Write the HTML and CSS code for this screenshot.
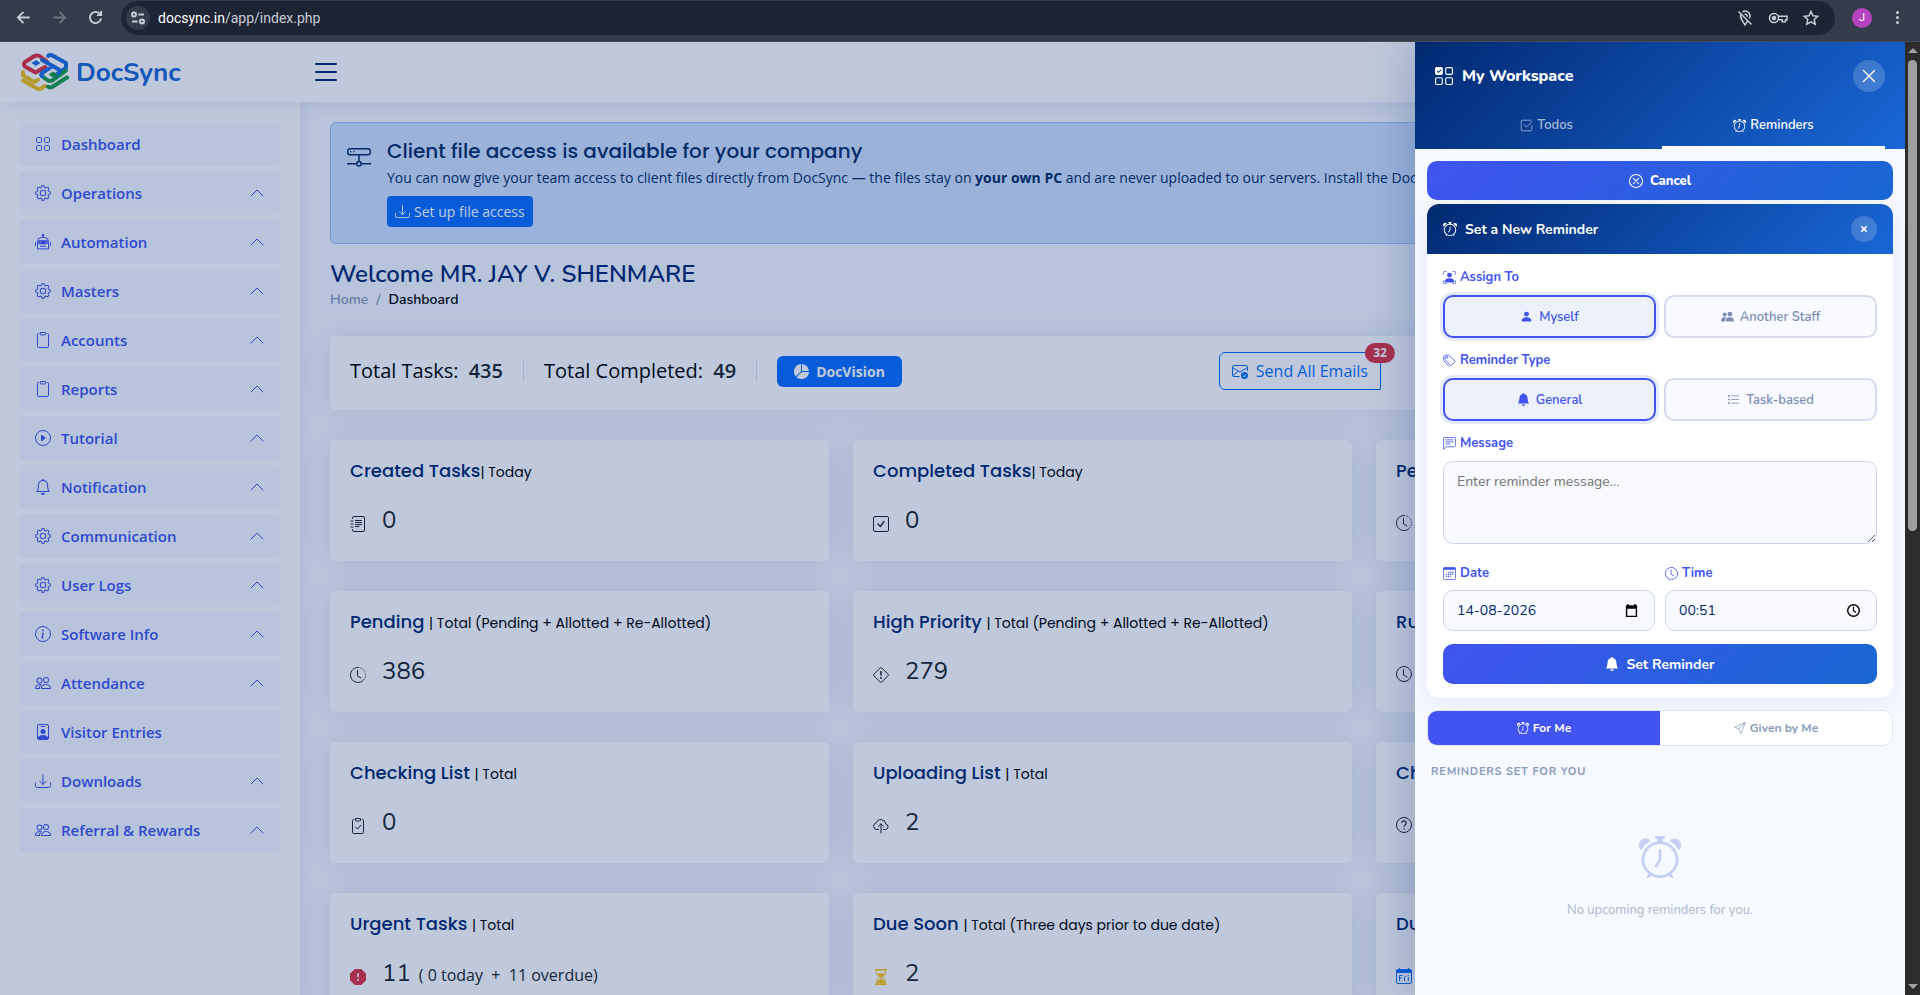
FILE: index.html
```
<!DOCTYPE html>
<html lang="en">
<head>
    <meta charset="UTF-8">
    <meta name="viewport" content="width=device-width, initial-scale=1.0">
    <title>Dashboard - DocSync</title>
    <link rel="stylesheet" href="styles.css">
</head>
<body>
    <!-- icon sprite -->
    <svg class="sprite" aria-hidden="true">
        <symbol id="i-grid" viewBox="0 0 16 16"><g fill="none" stroke="currentColor"><rect x="1.5" y="1.5" width="5" height="5" rx="1"/><rect x="9.5" y="1.5" width="5" height="5" rx="1"/><rect x="1.5" y="9.5" width="5" height="5" rx="1"/><rect x="9.5" y="9.5" width="5" height="5" rx="1"/></g></symbol>
        <symbol id="i-gear" viewBox="0 0 16 16"><path d="M8 4.754a3.246 3.246 0 1 0 0 6.492 3.246 3.246 0 0 0 0-6.492M5.754 8a2.246 2.246 0 1 1 4.492 0 2.246 2.246 0 0 1-4.492 0"/><path d="M9.796 1.343c-.527-1.79-3.065-1.79-3.592 0l-.094.319a.873.873 0 0 1-1.255.52l-.292-.16c-1.64-.892-3.433.902-2.54 2.541l.159.292a.873.873 0 0 1-.52 1.255l-.319.094c-1.79.527-1.79 3.065 0 3.592l.319.094a.873.873 0 0 1 .52 1.255l-.16.292c-.892 1.64.901 3.434 2.541 2.54l.292-.159a.873.873 0 0 1 1.255.52l.094.319c.527 1.79 3.065 1.79 3.592 0l.094-.319a.873.873 0 0 1 1.255-.52l.292.16c1.64.893 3.434-.902 2.54-2.541l-.159-.292a.873.873 0 0 1 .52-1.255l.319-.094c1.79-.527 1.79-3.065 0-3.592l-.319-.094a.873.873 0 0 1-.52-1.255l.16-.292c.893-1.64-.902-3.433-2.541-2.54l-.292.159a.873.873 0 0 1-1.255-.52zm-2.633.283c.246-.835 1.428-.835 1.674 0l.094.319a1.873 1.873 0 0 0 2.693 1.115l.291-.16c.764-.415 1.6.42 1.184 1.185l-.159.292a1.873 1.873 0 0 0 1.116 2.692l.318.094c.835.246.835 1.428 0 1.674l-.319.094a1.873 1.873 0 0 0-1.115 2.693l.16.291c.415.764-.42 1.6-1.185 1.184l-.291-.159a1.873 1.873 0 0 0-2.693 1.116l-.094.318c-.246.835-1.428.835-1.674 0l-.094-.319a1.873 1.873 0 0 0-2.692-1.115l-.292.16c-.764.415-1.6-.42-1.184-1.185l.159-.291A1.873 1.873 0 0 0 1.945 8.93l-.319-.094c-.835-.246-.835-1.428 0-1.674l.319-.094A1.873 1.873 0 0 0 3.06 4.377l-.16-.292c-.415-.764.42-1.6 1.185-1.184l.292.159a1.873 1.873 0 0 0 2.692-1.115z"/></symbol>
        <symbol id="i-robot" viewBox="0 0 16 16"><path fill-rule="evenodd" d="M4 6.2h8a.8.8 0 0 1 .8.8v1.6a1.6 1.6 0 0 1-1.6 1.6H4.8a1.6 1.6 0 0 1-1.6-1.6V7a.8.8 0 0 1 .8-.8zm1.2 1.2a.7.7 0 1 0 0 1.4.7.7 0 0 0 0-1.4zm5.6 0a.7.7 0 1 0 0 1.4.7.7 0 0 0 0-1.4z"/><path d="M8 .5v3M2.5 14.5v-7a4 4 0 0 1 4-4h3a4 4 0 0 1 4 4v7zM.5 8.5v3M15.5 8.5v3M5.5 12.3h5" fill="none" stroke="currentColor" stroke-linecap="round" stroke-linejoin="round"/><circle cx="8" cy="1.2" r="1.2"/></symbol>
        <symbol id="i-clipboard" viewBox="0 0 16 16"><g fill="none" stroke="currentColor" stroke-linecap="round"><path d="M4 1.5h-.5a1 1 0 0 0-1 1v12a1 1 0 0 0 1 1h9a1 1 0 0 0 1-1v-12a1 1 0 0 0-1-1H12"/><rect x="5.5" y=".5" width="5" height="2.5" rx=".5"/></g></symbol>
        <symbol id="i-clipboard-check" viewBox="0 0 16 16"><g fill="none" stroke="currentColor" stroke-linecap="round" stroke-linejoin="round"><path d="M4 1.5h-.5a1 1 0 0 0-1 1v12a1 1 0 0 0 1 1h9a1 1 0 0 0 1-1v-12a1 1 0 0 0-1-1H12"/><rect x="5.5" y=".5" width="5" height="2.5" rx=".5"/><path d="m5.5 9 2 2 3.2-3.7"/></g></symbol>
        <symbol id="i-play" viewBox="0 0 16 16"><circle cx="8" cy="8" r="7.5" fill="none" stroke="currentColor"/><path d="M6.3 5.1a.5.5 0 0 1 .5 0l3.5 2.5a.5.5 0 0 1 0 .8l-3.5 2.5a.5.5 0 0 1-.8-.4v-5a.5.5 0 0 1 .3-.4"/></symbol>
        <symbol id="i-bell" viewBox="0 0 16 16"><path d="M8 16a2 2 0 0 0 2-2H6a2 2 0 0 0 2 2M8 1.918l-.797.161A4 4 0 0 0 4 6c0 .628-.134 2.197-.459 3.742-.16.767-.376 1.566-.663 2.258h10.244c-.287-.692-.502-1.49-.663-2.258C12.134 8.197 12 6.628 12 6a4 4 0 0 0-3.203-3.92zM14.22 12c.223.447.481.801.78 1H1c.299-.199.557-.553.78-1C2.68 10.2 3 6.88 3 6c0-2.42 1.72-4.44 4.005-4.901a1 1 0 1 1 1.99 0A5 5 0 0 1 13 6c0 .88.32 4.2 1.22 6"/></symbol>
        <symbol id="i-bell-fill" viewBox="0 0 16 16"><path d="M8 16a2 2 0 0 0 2-2H6a2 2 0 0 0 2 2m.995-14.901a1 1 0 1 0-1.99 0A5 5 0 0 0 3 6c0 1.098-.5 6-2 7h14c-1.5-1-2-5.902-2-7 0-2.42-1.72-4.44-4.005-4.901"/></symbol>
        <symbol id="i-info" viewBox="0 0 16 16"><circle cx="8" cy="8" r="7.5" fill="none" stroke="currentColor"/><path d="m8.93 6.588-2.29.287-.082.38.45.083c.294.07.352.176.288.469l-.738 3.468c-.194.897.105 1.319.808 1.319.545 0 1.178-.252 1.465-.598l.088-.416c-.2.176-.492.246-.686.246-.275 0-.375-.193-.304-.533zM9 4.5a1 1 0 1 1-2 0 1 1 0 0 1 2 0"/></symbol>
        <symbol id="i-people" viewBox="0 0 16 16"><path d="M15 14s1 0 1-1-1-4-5-4-5 3-5 4 1 1 1 1zm-7.978-1L7 12.996c.001-.264.167-1.03.76-1.72C8.312 10.629 9.282 10 11 10c1.717 0 2.687.63 3.24 1.276.593.69.758 1.457.76 1.72l-.008.002-.014.002zM11 7a2 2 0 1 0 0-4 2 2 0 0 0 0 4m3-2a3 3 0 1 1-6 0 3 3 0 0 1 6 0M6.936 9.28a6 6 0 0 0-1.23-.247A7 7 0 0 0 5 9c-4 0-5 3-5 4q0 1 1 1h4.216A2.24 2.24 0 0 1 5 13c0-1.01.377-2.042 1.09-2.904.243-.294.526-.569.846-.816M4.92 10A5.5 5.5 0 0 0 4 13H1c0-.26.164-1.03.76-1.724.545-.636 1.492-1.256 3.16-1.275ZM1.5 5.5a3 3 0 1 1 6 0 3 3 0 0 1-6 0m3-2a2 2 0 1 0 0 4 2 2 0 0 0 0-4"/></symbol>
        <symbol id="i-people-fill" viewBox="0 0 16 16"><path d="M7 14s-1 0-1-1 1-4 5-4 5 3 5 4-1 1-1 1zm4-6a3 3 0 1 0 0-6 3 3 0 0 0 0 6m-5.784 6A2.24 2.24 0 0 1 5 13c0-1.355.68-2.75 1.936-3.72A6.3 6.3 0 0 0 5 9c-4 0-5 3-5 4s1 1 1 1zM4.5 8a2.5 2.5 0 1 0 0-5 2.5 2.5 0 0 0 0 5"/></symbol>
        <symbol id="i-person-fill" viewBox="0 0 16 16"><path d="M3 14s-1 0-1-1 1-4 6-4 6 3 6 4-1 1-1 1zm5-6a3 3 0 1 0 0-6 3 3 0 0 0 0 6"/></symbol>
        <symbol id="i-visitor" viewBox="0 0 16 16"><rect x="2.5" y=".5" width="11" height="15" rx="1.5" fill="none" stroke="currentColor"/><path d="M6 2.5h4" stroke="currentColor" stroke-linecap="round"/><circle cx="8" cy="7.5" r="2.5"/><path d="M2.5 14.5c.8-2.6 3-3.5 5.5-3.5s4.7.9 5.5 3.5l-1 1h-9z"/></symbol>
        <symbol id="i-download" viewBox="0 0 16 16"><path d="M.5 9.9v2.6a2 2 0 0 0 2 2h11a2 2 0 0 0 2-2V9.9M8 1.5v9.8M4.8 8.2 8 11.4l3.2-3.2" fill="none" stroke="currentColor" stroke-linecap="round" stroke-linejoin="round"/></symbol>
        <symbol id="i-chevron-up" viewBox="0 0 16 16"><path d="m2 11 6-6 6 6" fill="none" stroke="currentColor" stroke-linecap="round" stroke-linejoin="round"/></symbol>
        <symbol id="i-list" viewBox="0 0 16 16"><path d="M3 4h10M3 8h10M3 12h10" fill="none" stroke="currentColor" stroke-linecap="round"/></symbol>
        <symbol id="i-hdd" viewBox="0 0 16 16"><g fill="none" stroke="currentColor"><rect x=".5" y="2.5" width="15" height="4" rx="1.5"/><path d="M8 6.5V11M0 12.5h6.5M9.5 12.5H16"/><circle cx="8" cy="12.5" r="1.5"/></g><circle cx="2.5" cy="4.5" r=".5"/><circle cx="4.5" cy="4.5" r=".5"/></symbol>
        <symbol id="i-pie" viewBox="0 0 16 16"><path d="M15.985 8.5H8.207l-5.5 5.5a8 8 0 0 0 13.277-5.5zM2 13.292A8 8 0 0 1 7.5.015v7.778zM8.5.015V7.5h7.485A8 8 0 0 0 8.5.015"/></symbol>
        <symbol id="i-mail-check" viewBox="0 0 16 16"><path d="M7.5 13.5H2A1.5 1.5 0 0 1 .5 12V4A1.5 1.5 0 0 1 2 2.5h12A1.5 1.5 0 0 1 15.5 4v4M.5 4.5 8 9l7.5-4.5M.7 12.8l5.7-4.6" fill="none" stroke="currentColor"/><path fill-rule="evenodd" d="M12.5 9a3.5 3.5 0 1 0 0 7 3.5 3.5 0 0 0 0-7m1.7 2.6-1.9 2.7-1.5-1.3.5-.6.9.7 1.3-1.9z"/></symbol>
        <symbol id="i-journal" viewBox="0 0 16 16"><path d="M2.5 2.5V2A1.5 1.5 0 0 1 4 .5h9A1.5 1.5 0 0 1 14.5 2v12a1.5 1.5 0 0 1-1.5 1.5H4A1.5 1.5 0 0 1 2.5 14v-.5M1 5h2M1 8h2M1 11h2M5.5 4.5h6M5.5 6.5h6M5.5 8.5h6M5.5 10.5H9" fill="none" stroke="currentColor" stroke-linecap="round"/></symbol>
        <symbol id="i-check-square" viewBox="0 0 16 16"><rect x=".5" y=".5" width="15" height="15" rx="1.5" fill="none" stroke="currentColor"/><path d="m5 8 2.3 2.5L11 5.5" fill="none" stroke="currentColor" stroke-width="1.3" stroke-linecap="round" stroke-linejoin="round"/></symbol>
        <symbol id="i-clock" viewBox="0 0 16 16"><g fill="none" stroke="currentColor" stroke-linecap="round"><circle cx="8" cy="8" r="7.5"/><path d="M7.5 3.5V9l3.5 2"/></g></symbol>
        <symbol id="i-clock-history" viewBox="0 0 16 16"><g fill="none" stroke="currentColor"><path d="M8 .5a7.5 7.5 0 1 0 5.3 12.8"/><path d="M8 .5a7.5 7.5 0 0 1 5.3 12.8" stroke-dasharray="1.3 1.3"/><path d="M7.5 3.5V9l3.5 2" stroke-linecap="round"/></g></symbol>
        <symbol id="i-diamond" viewBox="0 0 16 16"><path d="M7.3.9a1 1 0 0 1 1.4 0l6.4 6.4a1 1 0 0 1 0 1.4l-6.4 6.4a1 1 0 0 1-1.4 0L.9 8.7a1 1 0 0 1 0-1.4z" fill="none" stroke="currentColor"/><path d="M7.1 5a.9.9 0 1 1 1.8 0l-.35 3.5a.55.55 0 0 1-1.1 0zM9 11a1 1 0 1 1-2 0 1 1 0 0 1 2 0"/></symbol>
        <symbol id="i-cloud-up" viewBox="0 0 16 16"><path d="M5.5 11.5H3.8A3.3 3.3 0 0 1 3.1 5a5 5 0 0 1 9.700 1 2.800 2.800 0 0 1-.2 5.500h-2.100M8 15V6M5.500 8.300 8 5.800l2.500 2.500" fill="none" stroke="currentColor" stroke-linecap="round" stroke-linejoin="round"/></symbol>
        <symbol id="i-question" viewBox="0 0 16 16"><g fill="none" stroke="currentColor"><circle cx="8" cy="8" r="7.5"/><path d="M5.8 6a2.2 2.2 0 1 1 3.3 1.9C8.3 8.4 8 8.7 8 9.8" stroke-width="1.2"/></g><circle cx="8" cy="11.7" r=".8"/></symbol>
        <symbol id="i-octagon-fill" viewBox="0 0 16 16"><path fill-rule="evenodd" d="M11.46.146A.5.5 0 0 0 11.107 0H4.893a.5.5 0 0 0-.353.146L.146 4.54A.5.5 0 0 0 0 4.893v6.214a.5.5 0 0 0 .146.353l4.394 4.394a.5.5 0 0 0 .353.146h6.214a.5.5 0 0 0 .353-.146l4.394-4.394a.5.5 0 0 0 .146-.353V4.893a.5.5 0 0 0-.146-.353zM8 4a.9.9 0 0 1 .9.995l-.35 3.507a.553.553 0 0 1-1.1 0L7.1 4.995A.9.9 0 0 1 8 4m0 6a1 1 0 1 1 0 2 1 1 0 0 1 0-2"/></symbol>
        <symbol id="i-hourglass" viewBox="0 0 16 16"><path d="M2 0h12v1.5H2zM2 14.5h12V16H2z"/><path d="M3.5 1.5v2c0 2.3 1.4 3.3 3.3 4.500-1.900 1.200-3.300 2.200-3.300 4.500v2M12.500 1.500v2c0 2.300-1.400 3.300-3.300 4.500 1.900 1.200 3.300 2.200 3.300 4.500v2" fill="none" stroke="currentColor"/><path d="M4.5 4.5h7C11 6.5 9 7 8.5 8v2c1.5.5 3 1.5 3.5 4.5H4c.5-3 2-4 3.500-4.500V8C7 7 5 6.500 4.500 4.500"/></symbol>
        <symbol id="i-calendar-day" viewBox="0 0 16 16"><rect x=".5" y="1.5" width="15" height="14" rx="1.5" fill="none" stroke="currentColor"/><path d="M.5 5V2.5a1 1 0 0 1 1-1H3V0h1v1.5h8V0h1v1.5h1.5a1 1 0 0 1 1 1V5z"/><path d="M3.5 13V7.5h3M3.5 10H6M8.500 13V9.500c0-1 .8-1.300 1.800-1.300M12.300 9v4M12.300 7v1" fill="none" stroke="currentColor"/></symbol>
        <symbol id="i-calendar-range" viewBox="0 0 16 16"><rect x=".5" y=".5" width="15" height="15" rx="1.5" fill="none" stroke="currentColor"/><path d="M.5 3.5h15V2A1.5 1.5 0 0 0 14 .5H2A1.5 1.5 0 0 0 .5 2z"/><path d="M6.5 6.5h7M3.5 9H13M3.5 11.5h6" stroke="currentColor" stroke-width="1.5" stroke-dasharray="1.5 1"/></symbol>
        <symbol id="i-workspace" viewBox="0 0 16 16"><g fill="none" stroke="currentColor"><rect x="9.5" y=".5" width="6" height="6" rx="1.2"/><rect x=".5" y="9.5" width="6" height="6" rx="1.2"/><rect x="9.5" y="9.5" width="6" height="6" rx="1.2"/></g><path fill-rule="evenodd" d="M1.5 0h4A1.5 1.5 0 0 1 7 1.5v4A1.5 1.5 0 0 1 5.5 7h-4A1.5 1.5 0 0 1 0 5.5v-4A1.5 1.5 0 0 1 1.5 0m3.7 2.1L3.1 4.2l-1-1-.5.6 1.5 1.5 2.7-2.7z"/></symbol>
        <symbol id="i-check2" viewBox="0 0 16 16"><path d="M13 1.5H3A1.5 1.5 0 0 0 1.5 3v10A1.5 1.5 0 0 0 3 14.5h10a1.5 1.5 0 0 0 1.5-1.5V8M5 7l3 3 6.8-7" fill="none" stroke="currentColor" stroke-linecap="round" stroke-linejoin="round"/></symbol>
        <symbol id="i-alarm" viewBox="0 0 16 16"><path d="M8.5 5.5a.5.5 0 0 0-1 0v3.362l-1.429 2.38a.5.5 0 1 0 .858.515l1.5-2.5A.5.5 0 0 0 8.5 9z"/><path d="M6.5 0a.5.5 0 0 0 0 1H7v1.07a7.001 7.001 0 0 0-3.273 12.474l-.602.602a.5.5 0 0 0 .707.708l.746-.746A6.97 6.97 0 0 0 8 16a6.97 6.97 0 0 0 3.422-.892l.746.746a.5.5 0 0 0 .707-.708l-.601-.602A7.001 7.001 0 0 0 9 2.07V1h.5a.5.5 0 0 0 0-1zm1.038 3.018a6 6 0 0 1 .924 0 6 6 0 1 1-.924 0M0 3.5c0 .753.333 1.429.86 1.887A8.04 8.04 0 0 1 4.387 1.86 2.5 2.5 0 0 0 0 3.5M13.5 1c-.753 0-1.429.333-1.887.86a8.04 8.04 0 0 1 3.527 3.527A2.5 2.5 0 0 0 13.5 1"/></symbol>
        <symbol id="i-x" viewBox="0 0 16 16"><path d="m2.5 2.5 11 11M13.5 2.5l-11 11" stroke="currentColor" stroke-width="1.4" stroke-linecap="round"/></symbol>
        <symbol id="i-x-bold" viewBox="0 0 16 16"><path d="m2.5 2.5 11 11M13.5 2.5l-11 11" stroke="currentColor" stroke-width="3.4"/></symbol>
        <symbol id="i-x-circle" viewBox="0 0 16 16"><g fill="none" stroke="currentColor" stroke-width="1.2" stroke-linecap="round"><circle cx="8" cy="8" r="7.4"/><path d="m5 5 6 6M11 5l-6 6"/></g></symbol>
        <symbol id="i-bounding" viewBox="0 0 16 16"><path d="M.5 4V2A1.5 1.5 0 0 1 2 .5h2M12 .5h2A1.5 1.5 0 0 1 15.5 2v2M15.5 12v2a1.5 1.5 0 0 1-1.5 1.5h-2M4 15.5H2A1.5 1.5 0 0 1 .5 14v-2" fill="none" stroke="currentColor" stroke-linecap="round"/><path d="M3 14s-1 0-1-1 1-4 6-4 6 3 6 4-1 1-1 1zm8-9a3 3 0 1 1-6 0 3 3 0 0 1 6 0"/></symbol>
        <symbol id="i-tags" viewBox="0 0 16 16"><g fill="none" stroke="currentColor" stroke-linejoin="round"><path d="M2.5 1.5h4.600l8 7.500-5.500 5.500-7.100-7.800z"/><path d="M.5 2.5v5.2l7 7.8"/><circle cx="5" cy="4.2" r="1"/></g></symbol>
        <symbol id="i-list-task" viewBox="0 0 16 16"><path d="M5.5 3.5h9M5.5 8h9M5.5 12.5h9" stroke="currentColor" stroke-linecap="round"/><path d="M1.5 2.5h2v2h-2zM1.5 7h2v2h-2zM1.5 11.5h2v2h-2z"/></symbol>
        <symbol id="i-chat" viewBox="0 0 16 16"><path d="M.5 14V2A1.5 1.5 0 0 1 2 .5h12A1.5 1.5 0 0 1 15.5 2v8.5A1.5 1.5 0 0 1 14 12H4.5L.5 15zM3.5 3.5h9M3.5 6h9M3.5 8.5h5" fill="none" stroke="currentColor" stroke-linecap="round"/></symbol>
        <symbol id="i-send" viewBox="0 0 16 16"><path d="M15.3.7.8 6.7l5.5 3 3 5.5zM15.3.7l-9 9" fill="none" stroke="currentColor" stroke-linejoin="round"/></symbol>
    </svg>

    <div class="browser-bar">
        <div class="nav-buttons">
            <svg viewBox="0 0 16 16"><path d="M14.5 8H2M8 2 2 8l6 6" /></svg>
            <svg class="dim" viewBox="0 0 16 16"><path d="M1.5 8H14M8 2l6 6-6 6"/></svg>
            <svg viewBox="0 0 16 16"><path d="M13 4.5A6 6 0 1 0 14 9M14 1v4.5H9.5"/></svg>
        </div>
        <div class="url-bar">
            <span class="site-info">
                <svg viewBox="0 0 16 16"><circle cx="4" cy="4.5" r="2"/><path d="M8.5 4.5H14M2 11.5h5.5"/><circle cx="12" cy="11.5" r="2"/></svg>
            </span>
            <span class="url">docsync.in<span>/app/index.php</span></span>
            <div class="url-actions">
                <svg viewBox="0 0 16 16"><path d="M4 4c-1.5 3 1 6.5 4 11 1.2-1.8 2.3-3.4 3.1-4.8M5.5 2C8.500-.2 13 2 13 6c0 .8-.2 1.600-.6 2.500M1.500 1.500l13 13"/><path d="M7.5 4.3A2 2 0 0 1 10 7"/></svg>
                <svg class="key" viewBox="0 0 20 16"><circle cx="6" cy="8" r="4.5"/><circle class="dot" cx="6" cy="8" r="1.5"/><path d="M10.2 6.3H19v3.4h-1.5v2h-3.3v-2h-4"/></svg>
                <svg viewBox="0 0 16 16"><path d="m8 1.5 2 4.3 4.7.5-3.5 3.2 1 4.7L8 11.8l-4.200 2.400 1-4.700L1.300 6.300 6 5.800z"/></svg>
            </div>
        </div>
        <span class="profile">J</span>
        <span class="kebab"><i></i><i></i><i></i></span>
    </div>

    <div class="viewport">
        <div class="app">
            <header class="topbar">
                <a href="#" class="logo">
                    <svg viewBox="0 0 48 38" fill="none" stroke-width="4" stroke-linejoin="round" stroke-linecap="round">
                        <path stroke="#f2c21a" d="M2 19v3.5L13 29l4-2.2"/>
                        <path stroke="#f2c21a" d="M2 27.5 16 35.5q2.5 1.2 5-.5l3-2"/>
                        <path stroke="#1d6fe0" d="M27 3q2-1.8 4.5-.5L45 10v5l-4 2.5"/>
                        <path stroke="#1d9c4b" d="M46 24.5 31 34q-2 1.2-4-.5"/>
                        <path stroke="#1d9c4b" d="M45 17.5 31 27.5q-2 1-4 0l-5.5-4.2"/>
                        <path stroke="#e2313c" d="M26 8.5 18.5 3q-2.5-1.2-5 0L4 9q-2 2 0 4.5l10.5 6 9.5-5.5"/>
                        <path stroke="#1d6fe0" d="m21 7 16 9q3 2 0 4.5l-2 1.2M30 14l-9 6q-1.5 1.5 0 3.2"/>
                        <path fill="#1d6fe0" stroke="none" d="m15 7 4.5 3-4.5 3-4.5-3z"/>
                        <path fill="#1d9c4b" stroke="none" d="m32 18.5 4.5 3-4.5 3-4.5-3z"/>
                    </svg>
                    <span>DocSync</span>
                </a>
                <button type="button" class="menu-toggle" aria-label="Toggle sidebar"><svg class="icon"><use href="#i-list"/></svg></button>
            </header>

            <div class="layout">
                <aside class="sidebar">
                    <nav>
                        <a href="#"><svg class="icon"><use href="#i-grid"/></svg><span>Dashboard</span></a>
                        <a href="#"><svg class="icon"><use href="#i-gear"/></svg><span>Operations</span><svg class="icon chevron"><use href="#i-chevron-up"/></svg></a>
                        <a href="#"><svg class="icon"><use href="#i-robot"/></svg><span>Automation</span><svg class="icon chevron"><use href="#i-chevron-up"/></svg></a>
                        <a href="#"><svg class="icon"><use href="#i-gear"/></svg><span>Masters</span><svg class="icon chevron"><use href="#i-chevron-up"/></svg></a>
                        <a href="#"><svg class="icon"><use href="#i-clipboard"/></svg><span>Accounts</span><svg class="icon chevron"><use href="#i-chevron-up"/></svg></a>
                        <a href="#"><svg class="icon"><use href="#i-clipboard"/></svg><span>Reports</span><svg class="icon chevron"><use href="#i-chevron-up"/></svg></a>
                        <a href="#"><svg class="icon"><use href="#i-play"/></svg><span>Tutorial</span><svg class="icon chevron"><use href="#i-chevron-up"/></svg></a>
                        <a href="#"><svg class="icon"><use href="#i-bell"/></svg><span>Notification</span><svg class="icon chevron"><use href="#i-chevron-up"/></svg></a>
                        <a href="#"><svg class="icon"><use href="#i-gear"/></svg><span>Communication</span><svg class="icon chevron"><use href="#i-chevron-up"/></svg></a>
                        <a href="#"><svg class="icon"><use href="#i-gear"/></svg><span>User Logs</span><svg class="icon chevron"><use href="#i-chevron-up"/></svg></a>
                        <a href="#"><svg class="icon"><use href="#i-info"/></svg><span>Software Info</span><svg class="icon chevron"><use href="#i-chevron-up"/></svg></a>
                        <a href="#"><svg class="icon"><use href="#i-people"/></svg><span>Attendance</span><svg class="icon chevron"><use href="#i-chevron-up"/></svg></a>
                        <a href="#"><svg class="icon"><use href="#i-visitor"/></svg><span>Visitor Entries</span></a>
                        <a href="#"><svg class="icon"><use href="#i-download"/></svg><span>Downloads</span><svg class="icon chevron"><use href="#i-chevron-up"/></svg></a>
                        <a href="#"><svg class="icon"><use href="#i-people"/></svg><span>Referral &amp; Rewards</span><svg class="icon chevron"><use href="#i-chevron-up"/></svg></a>
                    </nav>
                </aside>

                <main class="main">
                    <section class="banner">
                        <svg class="icon"><use href="#i-hdd"/></svg>
                        <div>
                            <h2>Client file access is available for your company</h2>
                            <p>You can now give your team access to client files directly from DocSync — the files stay on <strong>your own PC</strong> and are never uploaded to our servers. Install the Doc</p>
                            <button type="button" class="btn-primary"><svg class="icon"><use href="#i-download"/></svg> Set up file access</button>
                        </div>
                    </section>

                    <h1>Welcome MR. JAY V. SHENMARE</h1>
                    <nav class="breadcrumb"><a href="#">Home</a><span>/</span><span class="current">Dashboard</span></nav>

                    <section class="totals card">
                        <p>Total Tasks: <b>435</b></p>
                        <p>Total Completed: <b>49</b></p>
                        <button type="button" class="btn-primary docvision"><svg class="icon"><use href="#i-pie"/></svg> DocVision</button>
                        <div class="mail-group">
                            <button type="button" class="btn-outline"><svg class="icon"><use href="#i-mail-check"/></svg> Send All Emails<span class="badge">32</span></button>
                        </div>
                    </section>

                    <section class="cards">
                        <article class="card">
                            <h3>Created Tasks<span>| Today</span></h3>
                            <div class="count"><svg class="icon"><use href="#i-journal"/></svg><b>0</b></div>
                        </article>
                        <article class="card">
                            <h3>Completed Tasks<span>| Today</span></h3>
                            <div class="count"><svg class="icon"><use href="#i-check-square"/></svg><b>0</b></div>
                        </article>
                        <article class="card">
                            <h3>Pe</h3>
                            <div class="count"><svg class="icon"><use href="#i-clock-history"/></svg></div>
                        </article>
                        <article class="card">
                            <h3>Pending <span>| Total (Pending + Allotted + Re-Allotted)</span></h3>
                            <div class="count"><svg class="icon"><use href="#i-clock-history"/></svg><b>386</b></div>
                        </article>
                        <article class="card">
                            <h3>High Priority <span>| Total (Pending + Allotted + Re-Allotted)</span></h3>
                            <div class="count"><svg class="icon"><use href="#i-diamond"/></svg><b>279</b></div>
                        </article>
                        <article class="card">
                            <h3>Ru</h3>
                            <div class="count"><svg class="icon"><use href="#i-clock"/></svg></div>
                        </article>
                        <article class="card">
                            <h3>Checking List <span>| Total</span></h3>
                            <div class="count"><svg class="icon"><use href="#i-clipboard-check"/></svg><b>0</b></div>
                        </article>
                        <article class="card">
                            <h3>Uploading List <span>| Total</span></h3>
                            <div class="count"><svg class="icon"><use href="#i-cloud-up"/></svg><b>2</b></div>
                        </article>
                        <article class="card">
                            <h3>Ch</h3>
                            <div class="count"><svg class="icon"><use href="#i-question"/></svg></div>
                        </article>
                        <article class="card">
                            <h3>Urgent Tasks <span>| Total</span></h3>
                            <div class="count"><svg class="icon danger"><use href="#i-octagon-fill"/></svg><b>11</b><small>( 0 today &nbsp;+&nbsp; 11 overdue)</small></div>
                        </article>
                        <article class="card">
                            <h3>Due Soon <span>| Total (Three days prior to due date)</span></h3>
                            <div class="count"><svg class="icon warning"><use href="#i-hourglass"/></svg><b>2</b></div>
                        </article>
                        <article class="card">
                            <h3>Du</h3>
                            <div class="count"><svg class="icon primary"><use href="#i-calendar-day"/></svg></div>
                        </article>
                    </section>
                </main>
            </div>

            <div class="overlay"></div>

            <!-- workspace drawer -->
            <aside class="drawer">
                <div class="drawer-head">
                    <div class="drawer-title">
                        <svg class="icon"><use href="#i-workspace"/></svg>
                        <h2>My Workspace</h2>
                        <button type="button" class="round-btn" aria-label="Close workspace"><svg class="icon"><use href="#i-x"/></svg></button>
                    </div>
                    <div class="drawer-tabs">
                        <button type="button"><svg class="icon"><use href="#i-check2"/></svg> Todos</button>
                        <button type="button" class="active"><svg class="icon"><use href="#i-alarm"/></svg> Reminders</button>
                    </div>
                </div>

                <div class="drawer-body">
                    <button type="button" class="btn-gradient cancel"><svg class="icon"><use href="#i-x-circle"/></svg> Cancel</button>

                    <form class="reminder-form">
                        <div class="form-head">
                            <svg class="icon"><use href="#i-alarm"/></svg>
                            <h3>Set a New Reminder</h3>
                            <button type="button" class="round-btn small" aria-label="Close form"><svg class="icon"><use href="#i-x-bold"/></svg></button>
                        </div>
                        <div class="form-body">
                            <div class="field-label"><svg class="icon"><use href="#i-bounding"/></svg> Assign To</div>
                            <div class="choices">
                                <button type="button" class="choice active"><svg class="icon"><use href="#i-person-fill"/></svg> Myself</button>
                                <button type="button" class="choice"><svg class="icon"><use href="#i-people-fill"/></svg> Another Staff</button>
                            </div>
                            <div class="field-label"><svg class="icon"><use href="#i-tags"/></svg> Reminder Type</div>
                            <div class="choices">
                                <button type="button" class="choice active"><svg class="icon"><use href="#i-bell-fill"/></svg> General</button>
                                <button type="button" class="choice"><svg class="icon"><use href="#i-list-task"/></svg> Task-based</button>
                            </div>
                            <label class="field-label" for="message"><svg class="icon"><use href="#i-chat"/></svg> Message</label>
                            <textarea id="message" placeholder="Enter reminder message..."></textarea>
                            <div class="date-row">
                                <div>
                                    <label class="field-label" for="date"><svg class="icon"><use href="#i-calendar-range"/></svg> Date</label>
                                    <div class="picker">
                                        <input type="text" id="date" value="14-08-2026">
                                        <svg viewBox="0 0 16 16"><path fill-rule="evenodd" d="M3.5 1v1.5H2V15h12V2.5h-1.5V1H11v1.5H5V1zM3.5 6h9v7.5h-9z"/></svg>
                                    </div>
                                </div>
                                <div>
                                    <label class="field-label" for="time"><svg class="icon"><use href="#i-clock"/></svg> Time</label>
                                    <div class="picker">
                                        <input type="text" id="time" value="00:51">
                                        <svg viewBox="0 0 16 16"><path d="M8 4v4.3l2.8 1.8" fill="none" stroke="#000" stroke-width="1.3"/><circle cx="8" cy="8" r="6.2" fill="none" stroke="#000" stroke-width="1.5"/></svg>
                                    </div>
                                </div>
                            </div>
                            <button type="submit" class="btn-gradient"><svg class="icon"><use href="#i-bell-fill"/></svg> Set Reminder</button>
                        </div>
                    </form>

                    <div class="segmented">
                        <button type="button" class="active"><svg class="icon"><use href="#i-alarm"/></svg> For Me</button>
                        <button type="button"><svg class="icon"><use href="#i-send"/></svg> Given by Me</button>
                    </div>
                    <h4>Reminders set for you</h4>
                    <div class="empty">
                        <svg class="icon"><use href="#i-alarm"/></svg>
                        <p>No upcoming reminders for you.</p>
                    </div>
                </div>
            </aside>
        </div>

        <div class="scrollbar"><i class="up"></i><i class="thumb"></i><i class="down"></i></div>
    </div>
</body>
</html>
```
FILE: styles.css
```
* {
  box-sizing: border-box;
}

body {
  margin: 0;
  height: 100vh;
  display: flex;
  flex-direction: column;
  overflow: hidden;
  background: #f6f9ff;
  color: #000;
  font-family: "Open Sans", sans-serif;
  font-size: 16px;
}

h1, h2, h3, h4, p {
  margin: 0;
}

a {
  text-decoration: none;
}

button, input, textarea {
  font-family: inherit;
}

button {
  cursor: pointer;
}

.sprite {
  position: absolute;
  width: 0;
  height: 0;
}

.icon {
  width: 16px;
  height: 16px;
  flex: none;
  fill: currentColor;
}

/* browser toolbar */
.browser-bar {
  flex: none;
  display: flex;
  align-items: center;
  height: 42px;
  padding: 0 16px 6px;
  background: #343b4a;
  border-bottom: 1px solid #454a55;
  color: #c8ccd4;
}

.browser-bar svg {
  width: 16px;
  height: 16px;
  fill: none;
  stroke: #c8ccd4;
  stroke-width: 2;
}

.browser-bar .dim {
  opacity: 0.4;
}

.nav-buttons {
  display: flex;
  gap: 21px;
  width: 105px;
}

.nav-buttons svg {
  width: 15px;
  height: 15px;
}

.url-bar {
  flex: 1;
  display: flex;
  align-items: center;
  height: 34px;
  padding: 0 16px 0 5px;
  border-radius: 17px;
  background: #1d2535;
}

.site-info {
  display: flex;
  align-items: center;
  justify-content: center;
  width: 24px;
  height: 24px;
  border-radius: 50%;
  background: #343b4a;
}

.url {
  margin-left: 8px;
  color: #fff;
  font-family: Roboto, sans-serif;
  font-size: 14px;
}

.url span {
  color: #c8ccd4;
}

.url-actions {
  display: flex;
  align-items: center;
  gap: 15px;
  margin-left: auto;
}

.browser-bar .url-actions svg {
  stroke-width: 1.5;
}

.browser-bar .url-actions .key {
  width: 20px;
}

.browser-bar .url-actions .dot {
  fill: #c8ccd4;
}

.profile {
  width: 20px;
  height: 20px;
  margin: 0 24px 0 17px;
  border-radius: 50%;
  background: #b443c0;
  color: #fff;
  font-family: Roboto, sans-serif;
  font-size: 11px;
  line-height: 20px;
  text-align: center;
}

.kebab {
  display: grid;
  gap: 2px;
  padding-right: 5px;
}

.kebab i {
  width: 3px;
  height: 3px;
  border-radius: 50%;
  background: #c8ccd4;
}

.viewport {
  flex: 1;
  display: flex;
  min-height: 0;
}

.app {
  position: relative;
  flex: 1;
  min-width: 0;
  overflow: hidden;
}

.scrollbar {
  display: flex;
  flex-direction: column;
  align-items: center;
  width: 15px;
  padding: 6px 0;
  background: #2c2c2c;
}

.scrollbar .up,
.scrollbar .down {
  border: 5px solid transparent;
}

.scrollbar .up {
  border-top: 0;
  border-bottom-color: #9f9f9f;
}

.scrollbar .down {
  margin-top: auto;
  border-bottom: 0;
  border-top-color: #9f9f9f;
}

.scrollbar .thumb {
  width: 9px;
  height: 50%;
  margin-top: 7px;
  border-radius: 5px;
  background: #9f9f9f;
}

/* top bar */
.topbar {
  position: relative;
  z-index: 2;
  display: flex;
  align-items: center;
  height: 60px;
  padding-left: 21px;
  background: #fff;
  box-shadow: 0 2px 20px rgba(1, 41, 112, 0.1);
}

.logo {
  display: flex;
  align-items: center;
  gap: 7px;
  width: 289px;
  color: #1a67d2;
  font-family: "Nunito", "Open Sans", sans-serif;
  font-size: 26px;
  font-weight: 700;
}

.logo svg {
  width: 48px;
  height: 38px;
}

.menu-toggle {
  display: flex;
  padding: 0;
  border: 0;
  background: none;
  color: #012970;
}

.menu-toggle .icon {
  width: 32px;
  height: 32px;
}

.layout {
  display: flex;
  align-items: stretch;
}

/* sidebar */
.sidebar {
  flex: none;
  width: 300px;
  min-height: 100vh;
  padding: 20px;
  background: #fff;
  box-shadow: 0 0 20px rgba(1, 41, 112, 0.1);
}

.sidebar nav {
  display: grid;
  gap: 5px;
}

.sidebar a {
  display: flex;
  align-items: center;
  gap: 10px;
  padding: 10px 15px;
  border-radius: 4px;
  background: #f6f9ff;
  color: #4154f1;
  font-size: 15px;
  font-weight: 600;
  line-height: 24px;
}

.sidebar .chevron {
  margin-left: auto;
}

/* main column */
.main {
  flex: 1;
  min-width: 0;
  padding: 20px 30px;
}

.banner {
  display: flex;
  gap: 16px;
  margin-bottom: 16px;
  padding: 16px;
  border: 1px solid #9ec5fe;
  border-radius: 6px;
  background: #cfe2ff;
  color: #052c65;
}

.banner > .icon {
  width: 24px;
  height: 24px;
  margin-top: 6px;
}

.banner h2 {
  font-family: "Poppins", "Inter", sans-serif;
  font-size: 20px;
  font-weight: 500;
  line-height: 24px;
}

.banner p {
  margin: 4px 0 8px;
  font-size: 14px;
  line-height: 21px;
  white-space: nowrap;
}

.banner > div {
  min-width: 0;
}

.btn-primary {
  display: inline-flex;
  align-items: center;
  gap: 4px;
  height: 31px;
  padding: 0 8px;
  border: 0;
  border-radius: 4px;
  background: #0d6efd;
  color: #fff;
  font-size: 14px;
}

.btn-primary .icon {
  width: 15px;
  height: 15px;
}

h1 {
  color: #012970;
  font-family: "Nunito", "Open Sans", sans-serif;
  font-size: 24px;
  font-weight: 600;
  line-height: 29px;
}

.breadcrumb {
  display: flex;
  gap: 8px;
  margin-bottom: 26px;
  color: #899bbd;
  font-family: "Nunito", "Open Sans", sans-serif;
  font-size: 14px;
  font-weight: 600;
  line-height: 21px;
}

.breadcrumb a {
  color: #899bbd;
}

.breadcrumb .current {
  color: #000;
}

.card {
  border-radius: 5px;
  background: #fff;
  box-shadow: 0 0 30px rgba(1, 41, 112, 0.1);
}

.totals {
  display: flex;
  align-items: center;
  height: 74px;
  margin-bottom: 30px;
  padding: 0 20px 4px;
}

.totals p {
  margin-right: 20px;
  padding-right: 20px;
  border-right: 1px solid #dee2e6;
  font-size: 20px;
  line-height: 22px;
}

.totals b {
  margin-left: 5px;
  color: #212529;
  font-weight: 600;
}

.docvision {
  gap: 7px;
  padding: 0 17px;
  border-radius: 6px;
  font-weight: 700;
}

.mail-group {
  margin-left: auto;
  padding-right: 474px;
}

.btn-outline {
  position: relative;
  display: flex;
  align-items: center;
  gap: 8px;
  height: 38px;
  padding: 0 12px;
  border: 1px solid #0d6efd;
  border-radius: 6px 0 0 6px;
  background: none;
  color: #0d6efd;
  font-size: 16px;
}

.badge {
  position: absolute;
  top: 0;
  right: 0;
  padding: 0 8px;
  border-radius: 10px;
  background: #dc3545;
  color: #fff;
  font-size: 12px;
  font-weight: 700;
  line-height: 20px;
  transform: translate(50%, -50%);
}

.cards {
  display: grid;
  grid-template-columns: repeat(3, 1fr);
  gap: 30px 24px;
}

.cards .card {
  height: 121px;
  padding: 20px;
}

.card h3 {
  margin-bottom: 15px;
  color: #012970;
  font-family: "Poppins", "Inter", sans-serif;
  font-size: 18px;
  font-weight: 500;
  line-height: 22px;
  white-space: nowrap;
}

.card h3 span {
  color: #000;
  font-size: 14px;
  font-weight: 400;
}

.count {
  display: flex;
  align-items: center;
  height: 40px;
  color: #212529;
}

.count .icon {
  margin: 12px 16px 0 0;
}

.count b {
  margin-top: 4px;
  font-family: "Nunito", "Open Sans", sans-serif;
  font-size: 24px;
  font-weight: 400;
}

.count small {
  margin: 8px 0 0 8px;
  font-size: 16px;
}

.count .danger {
  color: #dc3545;
}

.count .warning {
  color: #ffc107;
}

.count .primary {
  color: #0d6efd;
}

.overlay {
  position: absolute;
  inset: 0;
  z-index: 3;
  background: rgba(1, 41, 112, 0.25);
}

/* workspace drawer */
.drawer {
  position: absolute;
  top: 0;
  right: 0;
  bottom: 0;
  z-index: 4;
  width: 490px;
  background: #f6f9ff;
  box-shadow: -8px 0 40px rgba(1, 41, 112, 0.2);
  font-family: "Nunito", "Open Sans", sans-serif;
}

.drawer-head {
  padding: 18px 20px 0;
  background: linear-gradient(135deg, #012970, #1967d8);
  color: #fff;
}

.drawer-title {
  display: flex;
  align-items: center;
  gap: 9px;
}

.drawer-title > .icon {
  width: 18px;
  height: 18px;
}

.drawer-title h2 {
  font-size: 16px;
  font-weight: 800;
}

.round-btn {
  display: flex;
  align-items: center;
  justify-content: center;
  width: 32px;
  height: 32px;
  margin-left: auto;
  padding: 0;
  border: 0;
  border-radius: 50%;
  background: rgba(255, 255, 255, 0.18);
  color: #fff;
}

.round-btn.small {
  width: 26px;
  height: 26px;
}

.round-btn.small .icon {
  width: 8px;
  height: 8px;
}

.drawer-tabs {
  display: flex;
  gap: 4px;
  margin-top: 10px;
}

.drawer-tabs button {
  flex: 1;
  display: flex;
  align-items: center;
  justify-content: center;
  gap: 4px;
  height: 47px;
  padding: 2px 0 0;
  border: solid transparent;
  border-width: 0 0 3px;
  background: none;
  color: rgba(255, 255, 255, 0.65);
  font-size: 13px;
  font-weight: 600;
}

.drawer-tabs button.active {
  border-color: #fff;
  color: #fff;
}

.drawer-tabs .icon,
.field-label .icon {
  width: 13px;
  height: 13px;
}

.drawer-body {
  padding: 12px;
}

.btn-gradient {
  display: flex;
  align-items: center;
  justify-content: center;
  gap: 7px;
  width: 100%;
  height: 40px;
  border: 0;
  border-radius: 10px;
  background: linear-gradient(135deg, #4154f1, #1967d2);
  color: #fff;
  font-size: 14px;
  font-weight: 700;
}

.btn-gradient .icon {
  width: 14px;
  height: 14px;
}

.btn-gradient.cancel {
  height: 39px;
  margin-bottom: 4px;
  font-size: 13px;
  font-weight: 800;
}

.reminder-form {
  margin-bottom: 12px;
  border-radius: 12px;
  overflow: hidden;
  background: #fff;
  box-shadow: 0 4px 24px rgba(65, 84, 241, 0.1);
}

.form-head {
  display: flex;
  align-items: center;
  gap: 8px;
  height: 50px;
  padding: 0 16px;
  background: linear-gradient(135deg, #012970, #1967d8);
  color: #fff;
}

.form-head > .icon {
  width: 14px;
  height: 14px;
}

.form-head h3 {
  font-size: 14px;
  font-weight: 700;
}

.form-body {
  padding: 14px 16px;
}

.field-label {
  display: flex;
  align-items: center;
  gap: 4px;
  margin-bottom: 9px;
  color: #4154f1;
  font-size: 13px;
  font-weight: 700;
  line-height: 18px;
}

.choices {
  display: flex;
  gap: 8px;
  margin-bottom: 13px;
}

.choice {
  flex: 1;
  display: flex;
  align-items: center;
  justify-content: center;
  gap: 6px;
  height: 43px;
  border: 2px solid #d5daee;
  border-radius: 10px;
  background: #f8faff;
  color: #7c8db5;
  font-size: 13px;
  font-weight: 600;
}

.choice .icon {
  width: 13px;
  height: 13px;
}

.choice.active {
  border-color: #4154f1;
  background: #ecf1fc;
  box-shadow: 0 0 0 3px #e4eafc;
  color: #4154f1;
}

.form-body textarea,
.form-body input {
  display: block;
  width: 100%;
  border: 1px solid #cdd3ee;
  border-radius: 10px;
  background: #f8faff;
  color: #012970;
  font-size: 14px;
}

.form-body textarea {
  height: 83px;
  margin-bottom: 20px;
  padding: 10px 13px;
}

.form-body textarea::placeholder {
  color: #757575;
}

.date-row {
  display: grid;
  grid-template-columns: 1fr 1fr;
  gap: 10px;
  margin-bottom: 13px;
}

.date-row .field-label {
  margin-bottom: 8px;
}

.form-body input {
  height: 41px;
  padding: 0 13px;
}

.picker {
  position: relative;
}

.picker svg {
  position: absolute;
  top: 13px;
  right: 16px;
  width: 15px;
  height: 15px;
}

.segmented {
  display: flex;
  height: 36px;
  overflow: hidden;
  border: 1px solid #dfe5f7;
  border-radius: 10px;
  background: #fff;
}

.segmented button {
  flex: 1;
  display: flex;
  align-items: center;
  justify-content: center;
  gap: 4px;
  border: 0;
  background: none;
  color: #899bbd;
  font-size: 12px;
  font-weight: 700;
}

.segmented button.active {
  background: #4154f1;
  color: #fff;
}

.segmented .icon {
  width: 12px;
  height: 12px;
}

.drawer h4 {
  padding: 18px 4px 17px;
  color: #899bbd;
  font-size: 11px;
  font-weight: 700;
  letter-spacing: 0.07em;
  line-height: 16px;
  text-transform: uppercase;
}

.empty {
  padding-top: 39px;
  color: #aab7cf;
  font-size: 13px;
  text-align: center;
}

.empty .icon {
  display: block;
  width: 42px;
  height: 42px;
  margin: 0 auto 23px;
  color: #c3cdf5;
}
```
